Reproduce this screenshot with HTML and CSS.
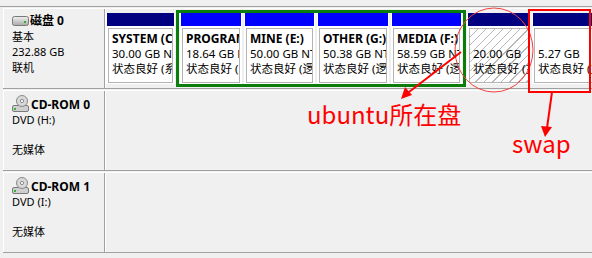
FILE: index.html
```html
<!DOCTYPE html>
<html lang="zh-CN">
<head>
    <meta charset="UTF-8" />
    <title>磁盘管理</title>
    <link rel="stylesheet" href="styles.css">
</head>
<body>

<div class="disks">

    <div class="row">
        <div class="label">
            <div class="name">
                <svg class="ico" width="17" height="10" viewBox="0 0 17 10">
                    <defs>
                        <linearGradient id="hd" x1="0" y1="0" x2="0" y2="1">
                            <stop offset="0" stop-color="#f2f2f2"/>
                            <stop offset="1" stop-color="#a8a8a8"/>
                        </linearGradient>
                    </defs>
                    <rect x="0.5" y="0.5" width="16" height="9" rx="2" fill="url(#hd)" stroke="#787878"/>
                    <rect x="12" y="5" width="2" height="2" fill="#2fb52f"/>
                </svg>磁盘 0
            </div>
            <div>基本</div>
            <div>232.88 GB</div>
            <div>联机</div>
        </div>
        <div class="area">
            <div class="part" style="width:69px">
                <div class="bar"></div>
                <div class="body"><b>SYSTEM (C:)</b><div>30.00 GB NTFS</div><div>状态良好 (系统, 启动, 活动, 主分区)</div></div>
            </div>
            <div class="extended">
                <div class="part logical" style="width:62px">
                    <div class="bar"></div>
                    <div class="body"><b>PROGRAM (D:)</b><div>18.64 GB NTFS</div><div>状态良好 (逻辑驱动器)</div></div>
                </div>
                <div class="part logical" style="width:71px">
                    <div class="bar"></div>
                    <div class="body"><b>MINE (E:)</b><div>50.00 GB NTFS</div><div>状态良好 (逻辑驱动器)</div></div>
                </div>
                <div class="part logical" style="width:72px">
                    <div class="bar"></div>
                    <div class="body"><b>OTHER (G:)</b><div>50.38 GB NTFS</div><div>状态良好 (逻辑驱动器)</div></div>
                </div>
                <div class="part logical" style="width:71px">
                    <div class="bar"></div>
                    <div class="body"><b>MEDIA (F:)</b><div>58.59 GB NTFS</div><div>状态良好 (逻辑驱动器)</div></div>
                </div>
            </div>
            <div class="part" style="width:64px">
                <div class="bar"></div>
                <div class="body hatch"><b>&nbsp;</b><div>20.00 GB</div><div>状态良好 (主分区)</div></div>
            </div>
            <div class="part" style="width:80px">
                <div class="bar"></div>
                <div class="body"><b>&nbsp;</b><div>5.27 GB</div><div>状态良好 (主分区)</div></div>
            </div>
        </div>
    </div>

    <div class="row">
        <div class="label cd">
            <div class="name">
                <svg class="ico" width="18" height="18" viewBox="0 0 18 18">
                    <rect x="0.5" y="10.5" width="16" height="6" rx="1.5" fill="#cfcfcf" stroke="#7a7a7a"/>
                    <rect x="2" y="13" width="2" height="2" fill="#2fb52f"/>
                    <circle cx="10" cy="6" r="5.5" fill="#d8d8d8" stroke="#8a8a8a"/>
                    <circle cx="10" cy="6" r="1.6" fill="#fff" stroke="#8a8a8a"/>
                </svg>CD-ROM 0
            </div>
            <div>DVD (H:)</div>
            <div class="media">无媒体</div>
        </div>
        <div class="area"></div>
    </div>

    <div class="row">
        <div class="label cd">
            <div class="name">
                <svg class="ico" width="18" height="18" viewBox="0 0 18 18">
                    <rect x="0.5" y="10.5" width="16" height="6" rx="1.5" fill="#cfcfcf" stroke="#7a7a7a"/>
                    <rect x="2" y="13" width="2" height="2" fill="#2fb52f"/>
                    <circle cx="10" cy="6" r="5.5" fill="#d8d8d8" stroke="#8a8a8a"/>
                    <circle cx="10" cy="6" r="1.6" fill="#fff" stroke="#8a8a8a"/>
                </svg>CD-ROM 1
            </div>
            <div>DVD (I:)</div>
            <div class="media">无媒体</div>
        </div>
        <div class="area"></div>
    </div>

</div>

<!-- hand drawn notes on top of the screenshot -->
<svg class="notes" width="592" height="258" viewBox="0 0 592 258">
    <ellipse cx="494" cy="50" rx="39" ry="42" fill="none" stroke="#f04040" stroke-width="1"/>
    <rect x="529" y="10" width="61" height="82" fill="none" stroke="#f00" stroke-width="2"/>
    <line x1="461" y1="52" x2="409" y2="92" stroke="#f00" stroke-width="2"/>
    <polygon points="401,99 405,87 412,95" fill="#f00"/>
    <line x1="552" y1="92" x2="547" y2="128" stroke="#f00" stroke-width="2"/>
    <polygon points="545,137 541,126 552,127" fill="#f00"/>
    <text x="307" y="124" class="note">ubuntu所在盘</text>
    <text x="512" y="153" class="note">swap</text>
</svg>

</body>
</html>
```

FILE: styles.css
```css
*{ box-sizing:border-box; }
body{ margin:0; width:592px; height:258px; overflow:hidden; position:relative; background:#f0f0f0;
      font-family:"Noto Sans","Noto Sans CJK SC",sans-serif; font-size:11px; color:#000; }

.disks{ margin-top:6px; border-top:1px solid #a0a0a0; }
.row{ display:flex; height:81px; margin:1px 0 0 3px; border-top:1px solid #fff; border-bottom:1px solid #a0a0a0; }

.label{ flex:none; width:102px; padding:4px 0 0 8px; line-height:15.5px;
        border-left:1px solid #fff; border-right:1px solid #a0a0a0; }
.label .name{ display:flex; align-items:center; height:15.5px; font-weight:bold; font-size:12px; }
.label .ico{ margin-right:1px; flex:none; }
.label.cd{ padding-top:2px; }
.label.cd .name{ height:19px; align-items:flex-end; }
.label.cd .ico{ margin-bottom:-1px; }
.label .media{ margin-top:14px; }

.area{ flex:1; display:flex; gap:1px; padding-top:1px; border-left:1px solid #fff; overflow:hidden; }

.part{ flex:none; display:flex; flex-direction:column; height:71px; margin-top:3px; padding:0 1px 1px; background:#fff; }
.bar{ height:13px; background:#000080; }
.logical .bar{ background:#0000ff; }
.body{ flex:1; margin:2px 1px 0; padding:2px 0 0 3px; border:1px solid #b4b4b4; line-height:15px;
       font-size:11.5px; white-space:nowrap; overflow:hidden; }
.body b, .body div{ display:block; overflow:hidden; }
.body b{ font-size:12px; }
.hatch{ background:repeating-linear-gradient(135deg, #fff 0 5px, #b8b8b8 5px 6px); }

.extended{ flex:none; display:flex; gap:2px; height:77px; padding:0 1px; border:3px solid #0a7d0a; }
.extended .part{ margin-top:0; }

.notes{ position:absolute; left:0; top:0; pointer-events:none; }
.note{ font-family:"Noto Sans CJK SC",sans-serif; font-size:24px; fill:#f00; }
```
